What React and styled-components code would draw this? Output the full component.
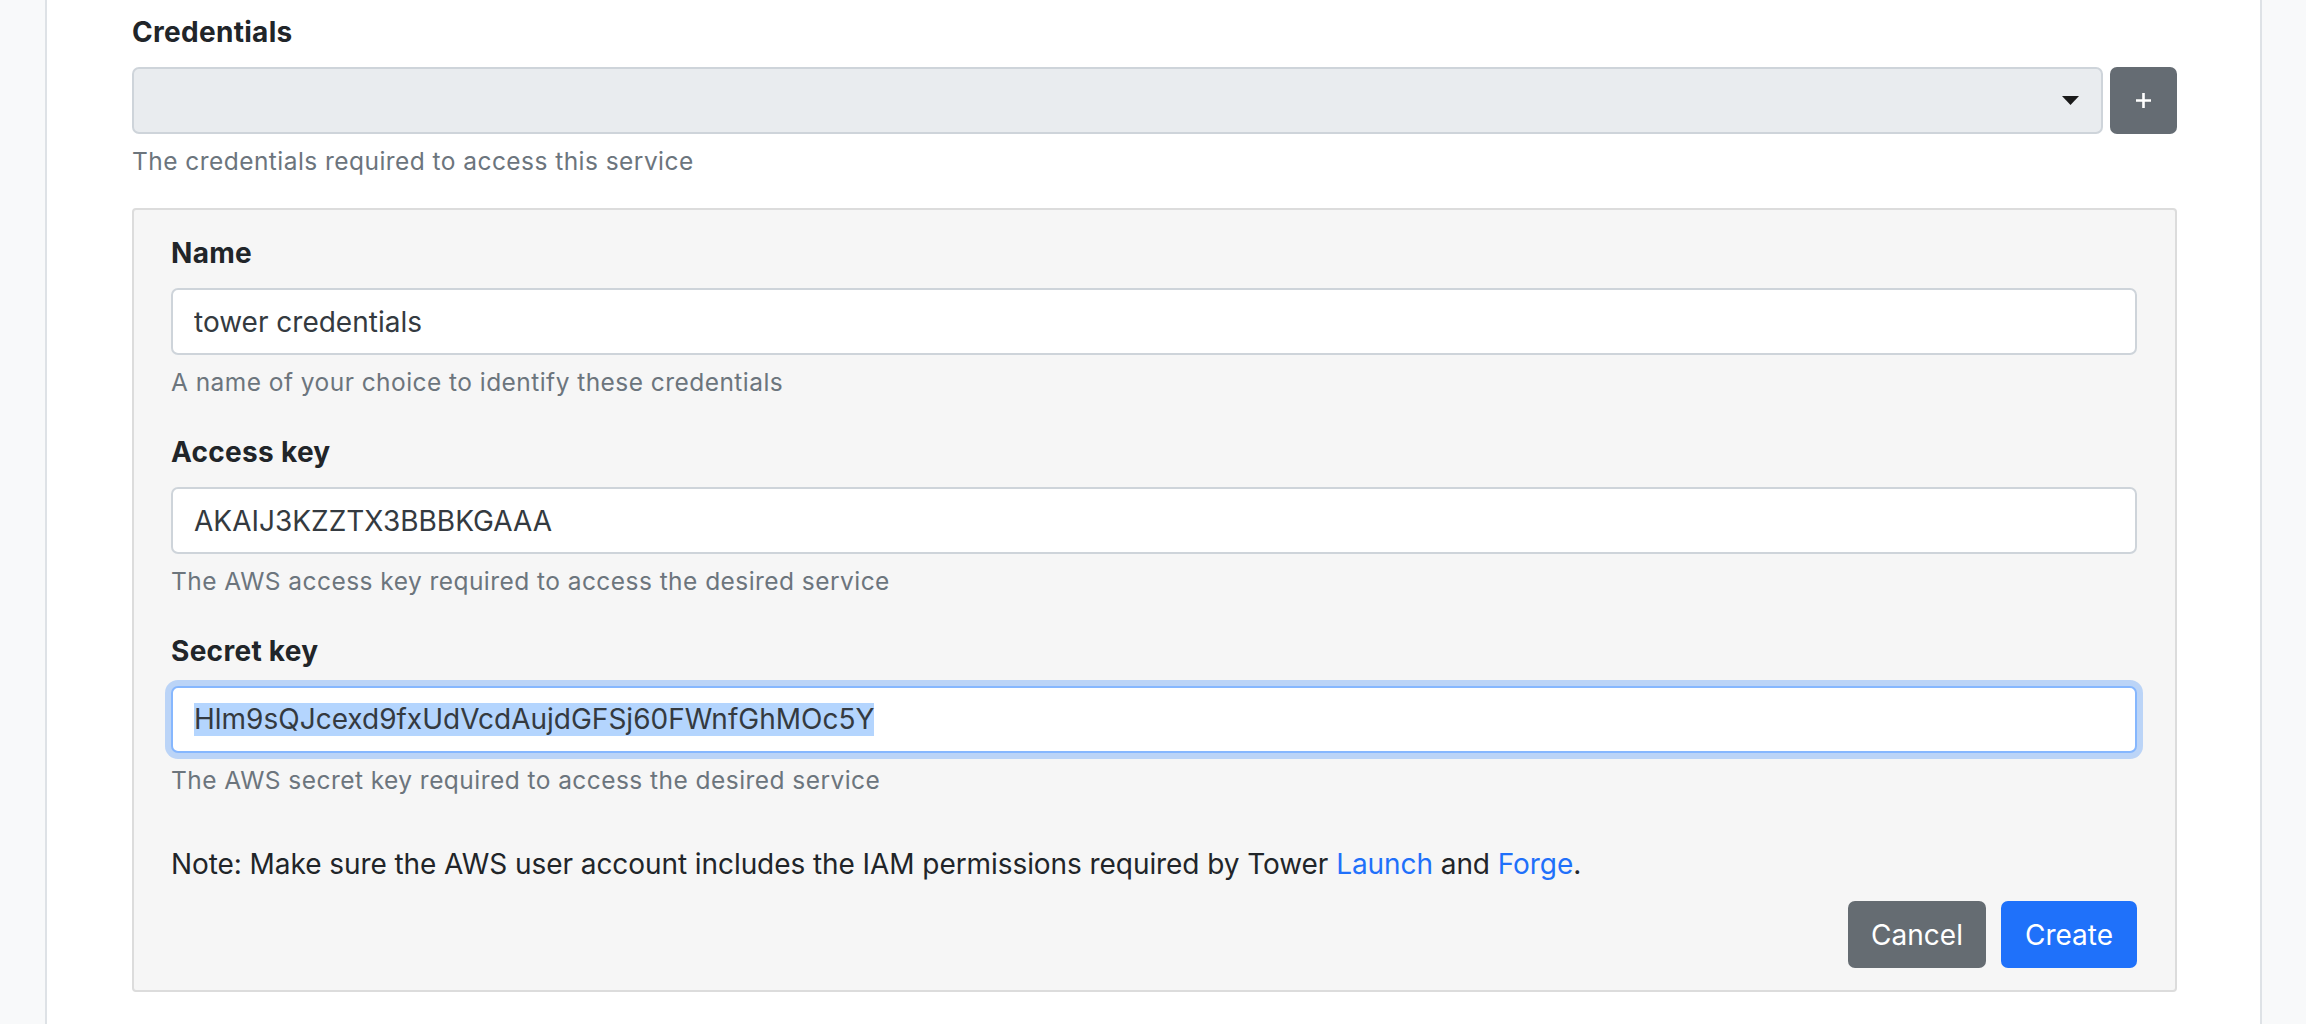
import React from "react";
import styled, { createGlobalStyle } from "styled-components";

const GlobalStyle = createGlobalStyle`
  html, body {
    margin: 0;
    padding: 0;
    height: 100%;
    background: #f8f9fa;
  }
  body {
    font-family: Inter, "Liberation Sans", Arial, sans-serif;
    color: #212529;
  }
  #root {
    height: 100%;
  }
`;

const Page = styled.div`
  height: 1024px;
  overflow: hidden;
  padding: 0 44px 0 45px;
  box-sizing: border-box;
`;

const Panel = styled.div`
  height: 100%;
  background: #fff;
  border-left: 2px solid #dee2e6;
  border-right: 2px solid #dee2e6;
  padding: 11px 83px 0 85px;
  box-sizing: border-box;
`;

const Label = styled.div`
  font-size: 28px;
  line-height: 42px;
  font-weight: 700;
  letter-spacing: 0.3px;
  margin-bottom: 14px;
`;

const SelectRow = styled.div`
  display: flex;
  gap: 7px;
  height: 67px;
`;

const Select = styled.div`
  flex: 1;
  display: flex;
  align-items: center;
  justify-content: flex-end;
  padding-right: 22px;
  background: #e9ecef;
  border: 2px solid #ced4da;
  border-radius: 7px;
`;

const IconButton = styled.button`
  width: 67px;
  height: 67px;
  border: none;
  border-radius: 7px;
  background: #656c73;
  color: #fff;
  display: flex;
  align-items: center;
  justify-content: center;
  padding: 0;
`;

const Help = styled.div`
  margin-top: 7px;
  padding-top: 2px;
  font-size: 24.5px;
  line-height: 37px;
  letter-spacing: 0.45px;
  color: #6c757d;
`;

const Card = styled.div`
  margin-top: 28px;
  background: #f6f6f6;
  border: 2px solid #dcdcdc;
  border-radius: 4px;
  padding: 22px 38px 22px 37px;
`;

const Group = styled.div`
  margin-bottom: ${(p) => (p.$last ? "44px" : "30px")};
`;

const Input = styled.input`
  display: block;
  width: 100%;
  box-sizing: border-box;
  height: 67px;
  padding: 0 21px;
  font-family: inherit;
  font-size: 28px;
  color: #343a40;
  background: #fff;
  border: 2px solid #ced4da;
  border-radius: 7px;
  outline: none;
`;

const FocusedField = styled.div`
  height: 67px;
  box-sizing: border-box;
  padding: 0 21px;
  display: flex;
  align-items: center;
  font-size: 28px;
  color: #343a40;
  background: #fff;
  border: 2px solid #86b7fe;
  border-radius: 7px;
  box-shadow: 0 0 0 6px rgba(13, 110, 253, 0.25);
`;

const Selected = styled.span`
  background: #b4d5fe;
  line-height: 33px;
`;

const Note = styled.p`
  margin: 0 0 16px;
  font-size: 28px;
  line-height: 42px;
  letter-spacing: -0.07px;
`;

const Link = styled.a`
  color: #1f70fa;
  text-decoration: none;
`;

const Actions = styled.div`
  display: flex;
  justify-content: flex-end;
  gap: 15px;
`;

const Button = styled.button`
  height: 67px;
  padding: 0 ${(p) => (p.$primary ? "24px" : "23px")};
  border: none;
  border-radius: 7px;
  font-family: inherit;
  font-size: 28px;
  color: #fff;
  background: ${(p) => (p.$primary ? "#1f71fa" : "#656c72")};
`;

const Caret = () => (
  <svg width="17" height="9" viewBox="0 0 17 9">
    <path d="M0 0 H17 L8.5 9 Z" fill="#1a1a1a" />
  </svg>
);

const Plus = () => (
  <svg width="17" height="17" viewBox="0 0 17 17">
    <path d="M8.5 1 V16 M1 8.5 H16" stroke="#fff" strokeWidth="2.6" />
  </svg>
);

const App = () => {
  return (
    <Page>
      <GlobalStyle />
      <Panel>
        <Label>Credentials</Label>
        <SelectRow>
          <Select>
            <Caret />
          </Select>
          <IconButton>
            <Plus />
          </IconButton>
        </SelectRow>
        <Help>The credentials required to access this service</Help>

        <Card>
          <Group>
            <Label>Name</Label>
            <Input defaultValue="tower credentials" />
            <Help>A name of your choice to identify these credentials</Help>
          </Group>
          <Group>
            <Label>Access key</Label>
            <Input defaultValue="AKAIJ3KZZTX3BBBKGAAA" />
            <Help>The AWS access key required to access the desired service</Help>
          </Group>
          <Group $last>
            <Label>Secret key</Label>
            <FocusedField>
              <Selected>Hlm9sQJcexd9fxUdVcdAujdGFSj60FWnfGhMOc5Y</Selected>
            </FocusedField>
            <Help>The AWS secret key required to access the desired service</Help>
          </Group>

          <Note>
            Note: Make sure the AWS user account includes the IAM permissions
            required by Tower <Link href="#">Launch</Link> and{" "}
            <Link href="#">Forge</Link>.
          </Note>

          <Actions>
            <Button>Cancel</Button>
            <Button $primary>Create</Button>
          </Actions>
        </Card>
      </Panel>
    </Page>
  );
};

export default App;
